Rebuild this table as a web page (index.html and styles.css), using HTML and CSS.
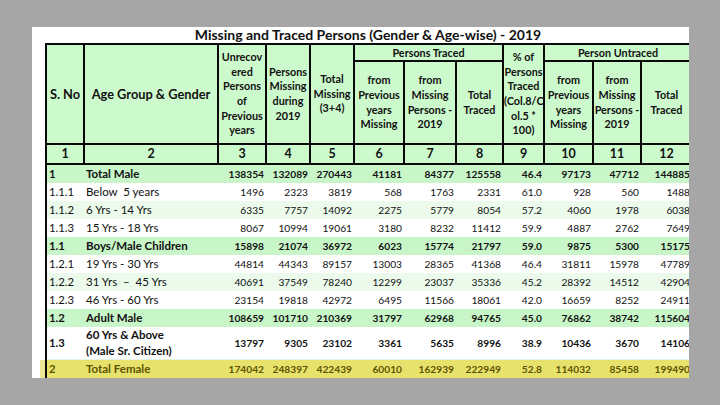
FILE: index.html
```html
<!DOCTYPE html>
<html>
<head>
<meta charset="utf-8">
<link rel="stylesheet" href="styles.css">
</head>
<body>
<div class="page">
  <div class="sheet">
    <div class="title">Missing and Traced Persons (Gender &amp; Age-wise) - 2019</div>
    <table class="grid">
      <colgroup>
        <col class="c1"><col class="c2"><col class="c3"><col class="c4"><col class="c5"><col class="c6"><col class="c7"><col class="c8"><col class="c9"><col class="c10"><col class="c11"><col class="c12">
      </colgroup>
      <thead>
        <tr class="h1">
          <th rowspan="2" class="big">S. No</th>
          <th rowspan="2" class="big">Age Group &amp; Gender</th>
          <th rowspan="2">Unrecov<br>ered<br>Persons<br>of<br>Previous<br>years</th>
          <th rowspan="2">Persons<br>Missing<br>during<br>2019</th>
          <th rowspan="2">Total<br>Missing<br>(3+4)</th>
          <th colspan="3" class="grp">Persons Traced</th>
          <th rowspan="2">% of<br>Persons<br>Traced<br>(Col.8/C<br>ol.5 *<br>100)</th>
          <th colspan="3" class="grp">Person Untraced</th>
        </tr>
        <tr class="h2">
          <th>from<br>Previous<br>years<br>Missing</th>
          <th>from<br>Missing<br>Persons -<br>2019</th>
          <th>Total<br>Traced</th>
          <th>from<br>Previous<br>years<br>Missing</th>
          <th>from<br>Missing<br>Persons -<br>2019</th>
          <th>Total<br>Traced</th>
        </tr>
        <tr class="nums">
          <th>1</th><th>2</th><th>3</th><th>4</th><th>5</th><th>6</th><th>7</th><th>8</th><th>9</th><th>10</th><th>11</th><th>12</th>
        </tr>
      </thead>
      <tbody>
        <tr class="sum">
          <td>1</td><td>Total Male</td><td>138354</td><td>132089</td><td>270443</td><td>41181</td><td>84377</td><td>125558</td><td>46.4</td><td>97173</td><td>47712</td><td>144885</td>
        </tr>
        <tr class="plain">
          <td>1.1.1</td><td>Below&nbsp; 5 years</td><td>1496</td><td>2323</td><td>3819</td><td>568</td><td>1763</td><td>2331</td><td>61.0</td><td>928</td><td>560</td><td>1488</td>
        </tr>
        <tr class="pale">
          <td>1.1.2</td><td>6 Yrs - 14 Yrs</td><td>6335</td><td>7757</td><td>14092</td><td>2275</td><td>5779</td><td>8054</td><td>57.2</td><td>4060</td><td>1978</td><td>6038</td>
        </tr>
        <tr class="plain">
          <td>1.1.3</td><td>15 Yrs - 18 Yrs</td><td>8067</td><td>10994</td><td>19061</td><td>3180</td><td>8232</td><td>11412</td><td>59.9</td><td>4887</td><td>2762</td><td>7649</td>
        </tr>
        <tr class="sum">
          <td>1.1</td><td>Boys/Male Children</td><td>15898</td><td>21074</td><td>36972</td><td>6023</td><td>15774</td><td>21797</td><td>59.0</td><td>9875</td><td>5300</td><td>15175</td>
        </tr>
        <tr class="plain">
          <td>1.2.1</td><td>19 Yrs - 30 Yrs</td><td>44814</td><td>44343</td><td>89157</td><td>13003</td><td>28365</td><td>41368</td><td>46.4</td><td>31811</td><td>15978</td><td>47789</td>
        </tr>
        <tr class="pale">
          <td>1.2.2</td><td>31 Yrs &nbsp;&ndash;&nbsp; 45 Yrs</td><td>40691</td><td>37549</td><td>78240</td><td>12299</td><td>23037</td><td>35336</td><td>45.2</td><td>28392</td><td>14512</td><td>42904</td>
        </tr>
        <tr class="plain">
          <td>1.2.3</td><td>46 Yrs - 60 Yrs</td><td>23154</td><td>19818</td><td>42972</td><td>6495</td><td>11566</td><td>18061</td><td>42.0</td><td>16659</td><td>8252</td><td>24911</td>
        </tr>
        <tr class="sum">
          <td>1.2</td><td>Adult Male</td><td>108659</td><td>101710</td><td>210369</td><td>31797</td><td>62968</td><td>94765</td><td>45.0</td><td>76862</td><td>38742</td><td>115604</td>
        </tr>
        <tr class="senior">
          <td>1.3</td><td>60 Yrs &amp; Above<br>(Male Sr. Citizen)</td><td>13797</td><td>9305</td><td>23102</td><td>3361</td><td>5635</td><td>8996</td><td>38.9</td><td>10436</td><td>3670</td><td>14106</td>
        </tr>
        <tr class="female">
          <td>2</td><td>Total Female</td><td>174042</td><td>248397</td><td>422439</td><td>60010</td><td>162939</td><td>222949</td><td>52.8</td><td>114032</td><td>85458</td><td>199490</td>
        </tr>
      </tbody>
    </table>
  </div>
</div>
</body>
</html>
```

FILE: styles.css
```css
html, body {
  margin: 0;
  padding: 0;
}
body {
  background: #a6a6a6;
  width: 720px;
  height: 405px;
  overflow: hidden;
  font-family: Lato, "Open Sans", sans-serif;
  color: #111;
}
.page {
  margin-left: 32px;
  margin-top: 27px;
  width: 657px;
  height: 351px;
  background: #fff;
  overflow: hidden;
}
.sheet {
  padding-left: 13px;
  width: 660px;
}
.title {
  width: 646px;
  height: 16px;
  line-height: 16px;
  text-align: center;
  font-weight: 700;
  font-size: 14px;
  color: #111;
}
.grid {
  border-collapse: collapse;
  table-layout: fixed;
  width: 646px;
}
.c1 { width: 38px; }
.c2 { width: 134px; }
.c3 { width: 48px; }
.c4 { width: 44px; }
.c5 { width: 44px; }
.c6 { width: 50px; }
.c7 { width: 52px; }
.c8 { width: 47px; }
.c9 { width: 41px; }
.c10 { width: 49px; }
.c11 { width: 48px; }
.c12 { width: 51px; }

.grid th {
  background: #cdfacd;
  border: 2px solid #0a0a0a;
  font-weight: 700;
  font-size: 10.8px;
  line-height: 14.6px;
  padding: 0;
  text-align: center;
  vertical-align: middle;
  white-space: nowrap;
}
.grid th.big {
  font-size: 12.8px;
}
.h1 { height: 17px; }
.h1 th.grp { font-size: 10.8px; line-height: 13px; }
.h2 { height: 83px; }
.nums { height: 20px; }
.nums th {
  font-size: 12.5px;
  line-height: 16px;
}

.grid td {
  padding: 0 2px 0 0;
  font-size: 10.2px;
  text-align: right;
  white-space: nowrap;
  vertical-align: middle;
  height: 18px;
  line-height: 14px;
}
.grid td:first-child {
  border-left: 2px solid #0a0a0a;
  text-align: left;
  padding-left: 2px;
  font-size: 11.3px;
}
.grid td:nth-child(2) {
  text-align: left;
  padding-left: 2px;
  font-size: 11.5px;
}
.sum td {
  background: #c8f6c8;
  font-weight: 700;
}
.plain td {
  background: #ffffff;
}
.pale td {
  background: #ebfaeb;
}
.senior td {
  background: #ffffff;
  font-weight: 700;
  height: 31px;
  border-bottom: 1px solid #e2f5e2;
}
.senior td:nth-child(2) {
  line-height: 16px;
}
.female td {
  background: #e7e26c;
  color: #5e5300;
  font-weight: 700;
}
.female td:first-child {
  box-shadow: -6px 0 0 #efe796;
}
```
